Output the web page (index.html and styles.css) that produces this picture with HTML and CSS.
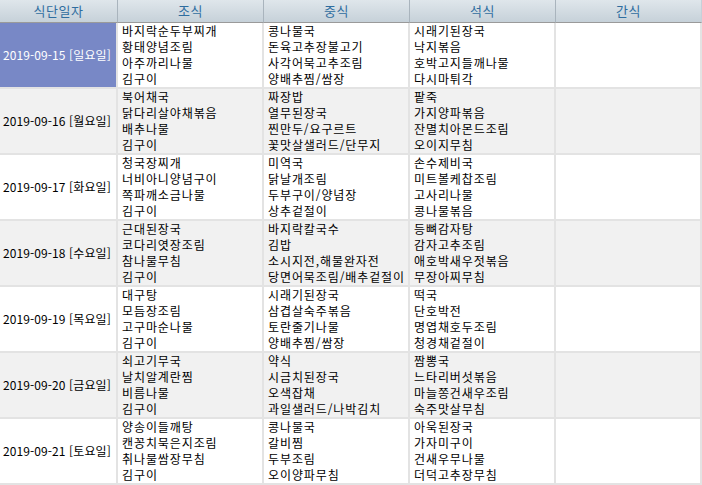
FILE: index.html
```html
<!DOCTYPE html>
<html lang="ko">
<head>
<meta charset="utf-8">
<link rel="stylesheet" href="styles.css">
</head>
<body>
<table class="meal">
  <colgroup>
    <col class="c-date"><col class="c-meal"><col class="c-meal"><col class="c-meal"><col class="c-meal">
  </colgroup>
  <thead>
    <tr><th>식단일자</th><th>조식</th><th>중식</th><th>석식</th><th>간식</th></tr>
  </thead>
  <tbody>
    <tr>
      <td class="date selected">2019-09-15 [일요일]</td>
      <td>바지락순두부찌개<br>황태양념조림<br>아주까리나물<br>김구이</td>
      <td>콩나물국<br>돈육고추장불고기<br>사각어묵고추조림<br>양배추찜/쌈장</td>
      <td>시래기된장국<br>낙지볶음<br>호박고지들깨나물<br>다시마튀각</td>
      <td></td>
    </tr>
    <tr class="alt">
      <td class="date">2019-09-16 [월요일]</td>
      <td>북어채국<br>닭다리살야채볶음<br>배추나물<br>김구이</td>
      <td>짜장밥<br>열무된장국<br>찐만두/요구르트<br>꽃맛살샐러드/단무지</td>
      <td>팥죽<br>가지양파볶음<br>잔멸치아몬드조림<br>오이지무침</td>
      <td></td>
    </tr>
    <tr>
      <td class="date">2019-09-17 [화요일]</td>
      <td>청국장찌개<br>너비아니양념구이<br>쪽파깨소금나물<br>김구이</td>
      <td>미역국<br>닭날개조림<br>두부구이/양념장<br>상추겉절이</td>
      <td>손수제비국<br>미트볼케찹조림<br>고사리나물<br>콩나물볶음</td>
      <td></td>
    </tr>
    <tr class="alt">
      <td class="date">2019-09-18 [수요일]</td>
      <td>근대된장국<br>코다리엿장조림<br>참나물무침<br>김구이</td>
      <td>바지락칼국수<br>김밥<br>소시지전,해물완자전<br>당면어묵조림/배추겉절이</td>
      <td>등뼈감자탕<br>감자고추조림<br>애호박새우젓볶음<br>무장아찌무침</td>
      <td></td>
    </tr>
    <tr>
      <td class="date">2019-09-19 [목요일]</td>
      <td>대구탕<br>모듬장조림<br>고구마순나물<br>김구이</td>
      <td>시래기된장국<br>삼겹살숙주볶음<br>토란줄기나물<br>양배추찜/쌈장</td>
      <td>떡국<br>단호박전<br>명엽채호두조림<br>청경채겉절이</td>
      <td></td>
    </tr>
    <tr class="alt">
      <td class="date">2019-09-20 [금요일]</td>
      <td>쇠고기무국<br>날치알계란찜<br>비름나물<br>김구이</td>
      <td>약식<br>시금치된장국<br>오색잡채<br>과일샐러드/나박김치</td>
      <td>짬뽕국<br>느타리버섯볶음<br>마늘쫑건새우조림<br>숙주맛살무침</td>
      <td></td>
    </tr>
    <tr>
      <td class="date">2019-09-21 [토요일]</td>
      <td>양송이들깨탕<br>캔꽁치묵은지조림<br>취나물쌈장무침<br>김구이</td>
      <td>콩나물국<br>갈비찜<br>두부조림<br>오이양파무침</td>
      <td>아욱된장국<br>가자미구이<br>건새우무나물<br>더덕고추장무침</td>
      <td></td>
    </tr>
  </tbody>
</table>
</body>
</html>
```
FILE: styles.css
```css
html, body {
  margin: 0;
  padding: 0;
  background: #ffffff;
}
body {
  font-family: "Noto Sans CJK KR", "Noto Sans", sans-serif;
  font-size: 12px;
  color: #000;
}
.meal {
  width: 702px;
  table-layout: fixed;
  border-collapse: separate;
  border-spacing: 0;
}
.c-date { width: 118px; }
.c-meal { width: 146px; }
.meal th {
  height: 22px;
  padding: 0;
  font-weight: normal;
  font-size: 13px;
  line-height: 22px;
  letter-spacing: 0.5px;
  color: #2f6d9f;
  text-align: center;
  background: linear-gradient(#dfe6eb, #c6d1d9);
  border-right: 1px solid #a9b4bd;
  border-bottom: 1px solid #9a9a9a;
}
.meal th:last-child { border-right: 1px solid #c6d1d9; }
.meal td {
  height: 64px;
  padding: 0 0 0 4px;
  line-height: 16px;
  letter-spacing: 0.9px;
  vertical-align: top;
  white-space: nowrap;
  overflow: hidden;
  border-right: 2px solid #e3e3e3;
  border-bottom: 2px solid #e3e3e3;
}
.meal tr.alt td { background: #f1f1f1; }
.meal td.date {
  padding-left: 3px;
  vertical-align: middle;
  letter-spacing: 0.1px;
}
.meal td.selected {
  background: #7888c6;
  color: #ffffff;
}
```
